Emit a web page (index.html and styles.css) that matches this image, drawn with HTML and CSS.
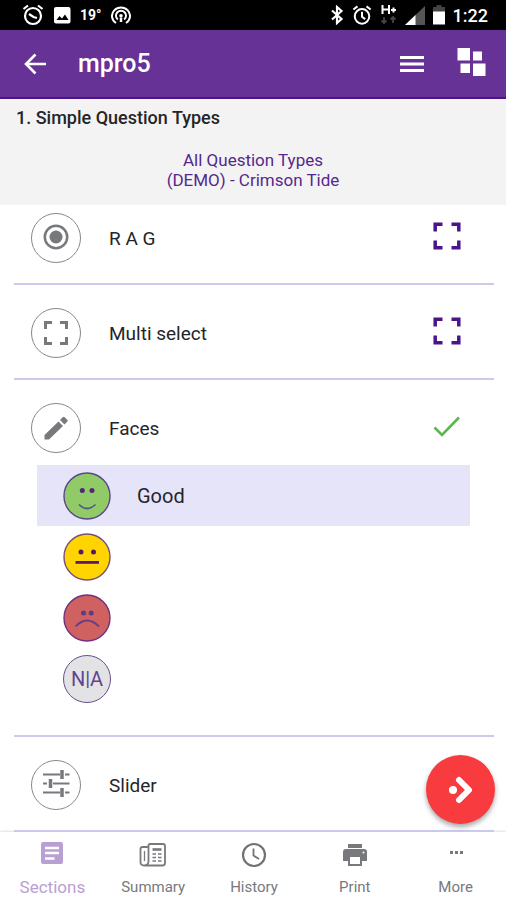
FILE: index.html
```html
<!DOCTYPE html>
<html lang="en">
<head>
<meta charset="utf-8">
<meta name="viewport" content="width=device-width, initial-scale=1">
<title>mpro5</title>
<link rel="stylesheet" href="styles.css">
</head>
<body>
<div class="status">
  <div class="status-group status-left">
    <svg width="22" height="22" viewBox="0 0 22 22" fill="none" stroke="#fff" stroke-width="2.2"><circle cx="11" cy="12" r="8"/><path d="M7 10l4.500 3 3.500 1M1.500 5L6 1.500M20.500 5L16 1.500"/></svg>
    <svg width="18" height="18" viewBox="0 0 18 18"><rect x="1" y="1" width="16.500" height="16.500" rx="2" fill="#fff"/><path d="M3.500 14l3-4 2.500 2.500 3-4 3.500 5.500z" fill="#000"/></svg>
    <span class="temp">19°</span>
    <svg width="20" height="20" viewBox="0 0 20 20" fill="none" stroke="#fff" stroke-width="2"><path d="M5 18a9 8.500 0 1 1 10 0M6.800 14.500a5 5 0 1 1 6.400 0"/><circle cx="10" cy="10.800" r="1.800" fill="#fff" stroke="none"/><path d="M10 12.500V17" stroke-width="2.500"/></svg>
  </div>
  <div class="status-group status-right">
    <svg width="14" height="20" viewBox="0 0 14 20" fill="none" stroke="#fff" stroke-width="2.200"><path d="M2 5.500l9.500 8.500L7 18V2l4.500 4L2 14.500"/></svg>
    <svg width="20" height="20" viewBox="0 0 22 22" fill="none" stroke="#fff" stroke-width="2.200"><circle cx="11" cy="12.500" r="8"/><path d="M11 7.500v5.500l3.500 2.500M1.500 5L6 1.500M20.500 5L16 1.500"/></svg>
    <svg width="17" height="22" viewBox="0 0 17 22" fill="none"><path d="M2.500 1v9M9 1v9M2.500 5.500H9M11 6h5M13.500 3.500v5" stroke="#fff" stroke-width="2"/><path d="M4 13v6M1.500 16.500L4 19l2.500-2.500M13 19v-6M10.500 15.500L13 13l2.500 2.500" stroke="#444" stroke-width="1.800"/></svg>
    <svg width="20" height="19" viewBox="0 0 20 19"><path d="M20 0v19H0z" fill="#555"/><path d="M10.500 9v10H0z" fill="#fff"/></svg>
    <svg width="12" height="20" viewBox="0 0 12 20"><path d="M3.500 0h5v2H12v5H0V2h3.500z" fill="#444"/><rect y="6.500" width="12" height="13" fill="#fff"/></svg>
    <span class="clock">1:22</span>
  </div>
</div>

<header class="appbar">
  <button class="bar-btn" aria-label="Back"><svg width="22" height="22" viewBox="0 0 22 22" fill="none" stroke="#fff" stroke-width="2.600"><path d="M11.500 1.500L2 11l9.500 9.500M2 11h20"/></svg></button>
  <h1>mpro5</h1>
  <button class="bar-btn" aria-label="Menu"><svg width="26" height="28" viewBox="0 0 26 28" fill="#fff"><rect x="2" y="6" width="24" height="3"/><rect x="2" y="12.500" width="24" height="3"/><rect x="2" y="19" width="24" height="3"/></svg></button>
  <button class="bar-btn" aria-label="Dashboard"><svg width="30" height="32" viewBox="0 0 30 32" fill="#fff"><rect x="1.500" y="0" width="12.500" height="12.500"/><rect x="17" y="3.500" width="9" height="9"/><rect x="4.500" y="15.500" width="9.500" height="9.500"/><rect x="17" y="15.500" width="12.500" height="12.500"/></svg></button>
</header>

<section class="heading">
  <h2>1. Simple Question Types</h2>
  <p>All Question Types<br>(DEMO) - Crimson Tide</p>
</section>

<main class="questions">
  <section class="question question-first">
    <div class="row">
      <span class="round"><svg width="26" height="28" viewBox="0 0 26 28"><circle cx="13" cy="13" r="11.200" fill="none" stroke="#77797c" stroke-width="2.500"/><circle cx="13" cy="13" r="6.500" fill="#77797c"/></svg></span>
      <h3>R A G</h3>
      <svg class="mark" width="28" height="32" viewBox="0 0 28 32" fill="none" stroke="#4b1489" stroke-width="3.500"><path d="M2.200 9.500v-7.300H9.500M18.500 2.200h7.300v7.300M25.800 18.500v7.300H18.500M9.500 25.800H2.200v-7.300"/></svg>
    </div>
  </section>
  <section class="question">
    <div class="row">
      <span class="round"><svg width="24" height="24" viewBox="0 0 24 24" fill="none" stroke="#77797c" stroke-width="3"><path d="M1.500 8V1.500H8M16 1.500h6.500V8M22.500 16v6.500H16M8 22.500H1.500V16"/></svg></span>
      <h3>Multi select</h3>
      <svg class="mark" width="28" height="32" viewBox="0 0 28 32" fill="none" stroke="#4b1489" stroke-width="3.500"><path d="M2.200 9.500v-7.300H9.500M18.500 2.200h7.300v7.300M25.800 18.500v7.300H18.500M9.500 25.800H2.200v-7.300"/></svg>
    </div>
  </section>
  <section class="question question-faces">
    <div class="row">
      <span class="round"><svg width="24" height="24" viewBox="0 0 24 24" fill="#77797c"><path d="M.5 19L14.500 5.500l4.500 4.500L5 23.500H.5zM16 4l2.700-2.800q1-1 2 0l2.500 2.600q1 1 0 2L20.500 8.500z"/></svg></span>
      <h3>Faces</h3>
      <svg class="mark" width="28" height="28" viewBox="0 0 28 28" fill="none" stroke="#5cb552" stroke-width="2.600"><path d="M1.500 13.500l7.500 7.500L26 3.500"/></svg>
    </div>
    <div class="options">
      <button class="option selected"><svg width="48" height="48" viewBox="0 0 48 48"><circle cx="24" cy="24" r="23" fill="#91cb67" stroke="#59458a" stroke-width="1.400"/><g fill="#512878"><circle cx="19.300" cy="18.500" r="2.500"/><circle cx="29" cy="18.500" r="2.500"/></g><path d="M16 32.500q8 8 16.500 0" fill="none" stroke="#51588a" stroke-width="1.700"/></svg><span>Good</span></button>
      <button class="option" aria-label="Average"><svg width="48" height="48" viewBox="0 0 48 48"><circle cx="24" cy="24" r="23" fill="#ffd400" stroke="#765078" stroke-width="1.400"/><g fill="#551c66"><circle cx="18" cy="19" r="2.500"/><circle cx="30.500" cy="19" r="2.500"/><rect x="12.500" y="28" width="23.500" height="2.800"/></g></svg></button>
      <button class="option" aria-label="Poor"><svg width="48" height="48" viewBox="0 0 48 48"><circle cx="24" cy="24" r="23" fill="#cf6160" stroke="#71307f" stroke-width="1.400"/><g fill="#5b3b8b"><circle cx="20.500" cy="19" r="2.500"/><circle cx="28.200" cy="19" r="2.500"/></g><path d="M12.500 32.500q11.500-12 23.500 0" fill="none" stroke="#693d86" stroke-width="1.800"/></svg></button>
      <button class="option"><span class="na">N|A</span></button>
    </div>
  </section>
  <section class="question">
    <div class="row">
      <span class="round"><svg width="28" height="30" viewBox="0 0 28 30" fill="none" stroke="#77797c"><path d="M1 4.500h17M23 4.500h4.500M1 13.500h4M11 13.500h16.500M1 22.500h17M23 22.500h4.500" stroke-width="1.800"/><path d="M20 0v9M8.500 9v9M20 18v9" stroke-width="3.500"/></svg></span>
      <h3>Slider</h3>
    </div>
  </section>
  <button class="fab" aria-label="Next"><svg width="26" height="30" viewBox="0 0 26 30"><path d="M11 5l10 10-10 10" fill="none" stroke="#fff" stroke-width="6" stroke-linecap="round" stroke-linejoin="round"/><circle cx="5" cy="15" r="4" fill="#fff"/></svg></button>
</main>

<nav class="tabs">
  <a class="tab active" href="#sections"><svg width="28" height="28" viewBox="0 0 28 28"><rect x="3" y="1" width="22" height="22" rx="2" fill="#b9a0d3"/><path d="M7 7h14M7 12h14M7 17.500h9.500" stroke="#fff" stroke-width="2.600"/></svg><span>Sections</span></a>
  <a class="tab" href="#summary"><svg width="28" height="28" viewBox="0 0 28 28" fill="none" stroke="#77797c" stroke-width="1.800"><path d="M9.500 20V4.500q0-1.500 1.500-1.500h13q2 0 2 2v17q0 2.500-2.500 2.500H5q-3.500 0-3.500-3.500V8q0-2 2-2h5.500M9.500 20q0 4.500-4 4.500"/><path d="M5.500 10v10" stroke-width="1.300"/><path d="M13.500 8.500h9" stroke-width="2.600"/><path d="M13.500 13h3.500M19 13h3.500M13.500 16.500h3.500M19 16.500h3.500M13.500 20h3.500M19 20h3.500" stroke-width="1.500"/></svg><span>Summary</span></a>
  <a class="tab" href="#history"><svg width="28" height="28" viewBox="0 0 28 28" fill="none" stroke="#707276" stroke-width="2.200"><circle cx="14" cy="14" r="11"/><path d="M13.500 7.500v7l5.500 3.500" stroke-width="1.800"/></svg><span>History</span></a>
  <a class="tab" href="#print"><svg width="28" height="28" viewBox="0 0 28 28"><path d="M7 3h14v4H7z" fill="#77797c"/><path d="M5 8h18q3 0 3 3v9h-5v5H7v-5H2v-9q0-3 3-3z" fill="#77797c"/><path d="M9 16h10v7H9z" fill="#fff"/><circle cx="22.500" cy="11.500" r="1" fill="#fff"/></svg><span>Print</span></a>
  <a class="tab" href="#more"><svg width="28" height="28" viewBox="0 0 28 28" fill="#77797c"><rect x="8" y="10" width="3" height="3"/><rect x="13" y="10" width="3" height="3"/><rect x="18" y="10" width="3" height="3"/></svg><span>More</span></a>
</nav>
</body>
</html>
```

FILE: styles.css
```css
* {
  box-sizing: border-box;
}

body {
  margin: 0;
  min-height: 100vh;
  display: flex;
  flex-direction: column;
  background: #fff;
  color: #252528;
  font-family: Roboto, "Liberation Sans", sans-serif;
}

h1, h2, h3, p {
  margin: 0;
}

svg {
  display: block;
  flex-shrink: 0;
}

button {
  margin: 0;
  padding: 0;
  border: 0;
  background: none;
  color: inherit;
  font: inherit;
  cursor: pointer;
}

.status {
  display: flex;
  justify-content: space-between;
  align-items: center;
  height: 30px;
  padding: 0 18px 0 22px;
  background: #000;
  color: #fff;
}

.status-group {
  display: flex;
  align-items: center;
}

.status-left {
  gap: 9px;
}

.status-right {
  gap: 8px;
}

.temp {
  font-size: 14px;
  font-weight: 700;
}

.clock {
  font-size: 18px;
  font-weight: 500;
}

.appbar {
  display: flex;
  align-items: center;
  gap: 32px;
  height: 69px;
  padding: 0 20px 0 24px;
  background: #673296;
  border-bottom: 2px solid #4b1489;
  color: #fff;
}

.appbar h1 {
  flex: 1;
  font-size: 25px;
  font-weight: 500;
}

.heading {
  padding: 9px 16px 15px;
  background: #f3f3f4;
}

.heading h2 {
  font-size: 18px;
  line-height: 20px;
  font-weight: 500;
}

.heading p {
  margin-top: 22px;
  color: #56288c;
  font-size: 17px;
  line-height: 20px;
  text-align: center;
}

.questions {
  position: relative;
  flex: 1;
  padding: 0 12px 0 14px;
}

.question {
  padding: 23px 0 20px;
  border-bottom: 2px solid #cbc9ed;
}

.question-first {
  padding-top: 8px;
}

.question-faces {
  padding-bottom: 26px;
}

.row {
  display: flex;
  align-items: center;
  padding: 0 33px 0 17px;
}

.round {
  display: flex;
  align-items: center;
  justify-content: center;
  width: 50px;
  height: 50px;
  border: 1px solid #85878a;
  border-radius: 50%;
}

.row h3 {
  flex: 1;
  margin-left: 28px;
  font-size: 19px;
  font-weight: 400;
}

.options {
  display: flex;
  flex-direction: column;
  margin: 12px 24px 0 23px;
}

.option {
  display: flex;
  align-items: center;
  gap: 26px;
  height: 61px;
  padding: 0 26px;
  font-size: 20px;
}

.option.selected {
  background: #e6e4f9;
}

.na {
  display: flex;
  align-items: center;
  justify-content: center;
  width: 48px;
  height: 48px;
  border: 1px solid #66508f;
  border-radius: 50%;
  background: #e3e3e5;
  color: #63448f;
}

.fab {
  position: absolute;
  right: 11px;
  bottom: 8px;
  display: flex;
  align-items: center;
  justify-content: center;
  width: 69px;
  height: 69px;
  border-radius: 50%;
  background: #f83b3e;
  box-shadow: 0 3px 5px rgba(0, 0, 0, 0.35);
}

.tabs {
  display: grid;
  grid-template-columns: repeat(5, 1fr);
  height: 68px;
  padding-left: 2px;
  box-shadow: 0 -1px 2px rgba(0, 0, 0, 0.12);
}

.tab {
  display: flex;
  flex-direction: column;
  align-items: center;
  gap: 8px;
  padding-top: 9px;
  color: #77797c;
  font-size: 15px;
  line-height: 20px;
  text-decoration: none;
}

.tab.active {
  color: #b9a0d3;
  font-size: 17px;
}
```
